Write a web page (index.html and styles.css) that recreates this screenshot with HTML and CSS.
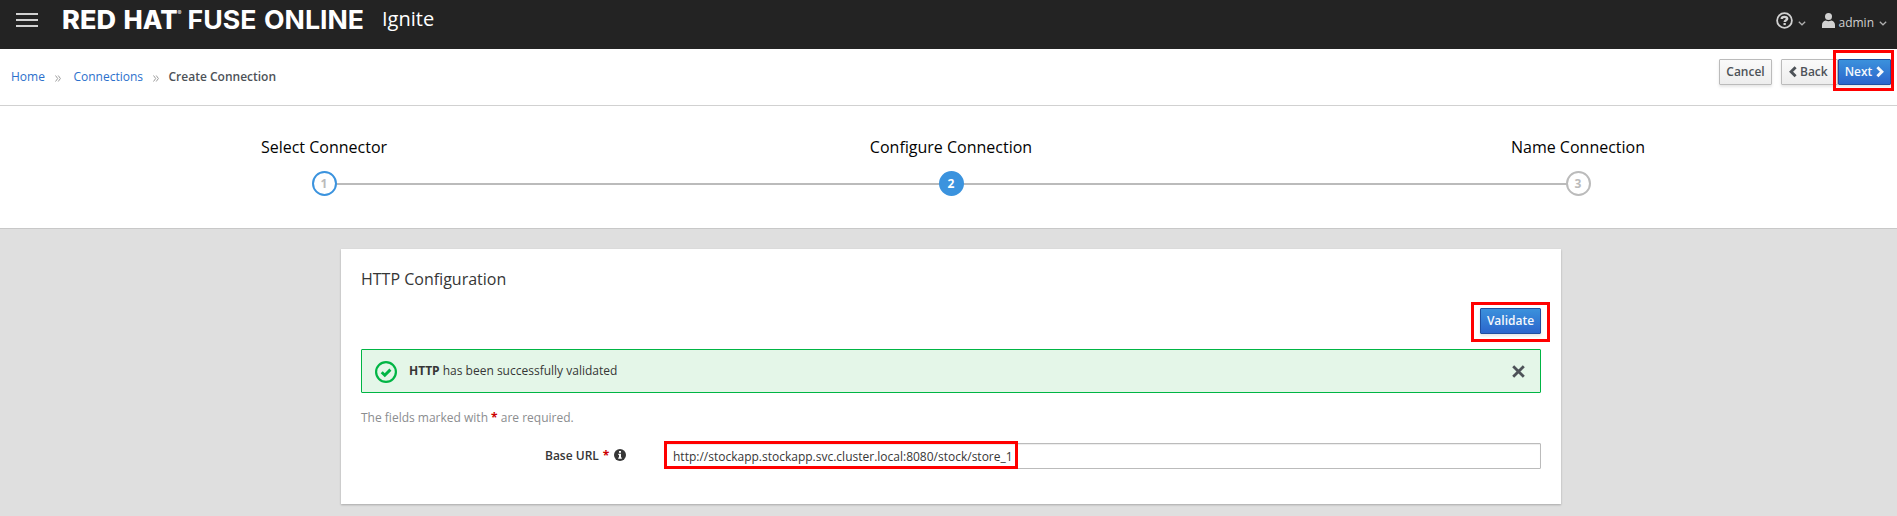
FILE: index.html
```html
<!DOCTYPE html>
<html lang="en">
<head>
<meta charset="utf-8">
<title>Create Connection</title>
<link rel="stylesheet" href="styles.css">
</head>
<body>
<header class="masthead">
  <div class="menu"><span></span><span></span><span></span></div>
  <svg class="brand" width="310" height="40" viewBox="0 0 310 40">
    <text class="brand-heavy" x="4" y="28.700" textLength="54" lengthAdjust="spacingAndGlyphs">RED</text>
    <text class="brand-heavy" x="65.500" y="28.700" textLength="54" lengthAdjust="spacingAndGlyphs">HAT</text>
    <text class="brand-reg" x="119.500" y="14.500">®</text>
    <text class="brand-bold" x="129.500" y="28.700" textLength="69" lengthAdjust="spacingAndGlyphs">FUSE</text>
    <text class="brand-bold" x="206" y="28.700" textLength="100" lengthAdjust="spacingAndGlyphs">ONLINE</text>
  </svg>
  <span class="app-name">Ignite</span>
  <div class="tools">
    <svg class="help" width="17" height="17" viewBox="0 0 17 17"><circle cx="8.5" cy="8.5" r="7.4" fill="none" stroke="#d1d1d1" stroke-width="1.8"/><path d="M5.700 7C5.800 4.300 11.200 4.200 11.200 6.800C11.200 8.300 8.800 8.200 8.700 10" fill="none" stroke="#d1d1d1" stroke-width="2.400"/><path d="M7.500 11h2.300v2.100H7.500z" fill="#d1d1d1"/></svg>
    <svg class="caret" width="8" height="5" viewBox="0 0 8 5"><path d="M.8.7L4 3.8L7.2.7"/></svg>
    <svg class="user" width="13" height="15" viewBox="0 0 13 15"><circle cx="6.5" cy="3.6" r="3.5" fill="#d1d1d1"/><path d="M0 15V12C0 9.2 1.5 7.8 3.7 7.4Q6.500 9 9.300 7.400C11.500 7.800 13 9.200 13 12V15z" fill="#d1d1d1"/></svg>
    <span class="user-name">admin</span>
    <svg class="caret" width="8" height="5" viewBox="0 0 8 5"><path d="M.8.7L4 3.8L7.2.7"/></svg>
  </div>
</header>
<nav class="toolbar">
  <div class="crumbs">
    <a>Home</a>
    <svg class="sep" width="6" height="7" viewBox="0 0 6 7"><path d="M.5.5L2.700 3.500L.5 6.500M3.200.5L5.400 3.500L3.200 6.500"/></svg>
    <a>Connections</a>
    <svg class="sep sep-last" width="6" height="7" viewBox="0 0 6 7"><path d="M.5.5L2.700 3.500L.5 6.500M3.200.5L5.400 3.500L3.200 6.500"/></svg>
    <b>Create Connection</b>
  </div>
  <div class="actions">
    <button class="btn cancel">Cancel</button>
    <button class="btn back"><svg width="8" height="12" viewBox="0 0 8 12"><path d="M6.600 1.300L2.100 5.800L6.600 10.300"/></svg>Back</button>
    <div class="marked">
      <button class="btn primary next">Next<svg width="8" height="12" viewBox="0 0 8 12"><path d="M1.400 1.300L5.900 5.800L1.400 10.300"/></svg></button>
      <span class="mark mark-next"></span>
    </div>
  </div>
</nav>
<ol class="wizard">
  <li class="step done"><span class="title">Select Connector</span><span class="num">1</span></li>
  <li class="step active"><span class="title">Configure Connection</span><span class="num">2</span></li>
  <li class="step"><span class="title">Name Connection</span><span class="num">3</span></li>
</ol>
<main class="card">
  <h2>HTTP Configuration</h2>
  <div class="validate-row">
    <div class="marked">
      <button class="btn primary validate">Validate</button>
      <span class="mark mark-validate"></span>
    </div>
  </div>
  <div class="alert">
    <svg class="ok" width="22" height="22" viewBox="0 0 22 22"><circle cx="11" cy="11" r="9.900" fill="none" stroke="#00b544" stroke-width="2.200"/><path d="M6.700 11.200L9.800 14.200L15.400 8.600" fill="none" stroke="#00b544" stroke-width="2.900"/></svg>
    <span class="message"><strong>HTTP</strong> has been successfully validated</span>
    <svg class="close" width="13" height="13" viewBox="0 0 13 13"><path d="M1.200 1.200L11.800 11.800M11.800 1.200L1.200 11.800" stroke="#4d5258" stroke-width="2.800"/></svg>
  </div>
  <p class="hint">The fields marked with <em>*</em> are required.</p>
  <div class="field">
    <label>Base URL <em>*</em><svg width="12" height="12" viewBox="0 0 12 12"><circle cx="6" cy="6" r="6" fill="#363636"/><path d="M5 2h2v1.700H5zM4.300 4.800H7v3.700h.8v1.300H4.200V8.500H5V6H4.300z" fill="#fff"/></svg></label>
    <div class="input">http://stockapp.stockapp.svc.cluster.local:8080/stock/store_1<span class="mark mark-url"></span></div>
  </div>
</main>
</body>
</html>
```
FILE: styles.css
```css
* { box-sizing: border-box; }
body {
  margin: 0;
  height: 516px;
  overflow: hidden;
  background: #dfdfdf;
  color: #363636;
  font: 12px/20px "Open Sans", sans-serif;
}
svg { display: block; flex: none; }
em { color: #c00; font-style: normal; font-weight: 700; }

.masthead {
  display: flex;
  align-items: flex-start;
  height: 49px;
  padding: 0 10px 0 16px;
  background: #232323;
}
.menu { display: grid; gap: 4px; margin-top: 13px; width: 22px; }
.menu span { height: 2px; background: #d1d1d1; }
.brand { margin-left: 20px; }
.brand text { fill: #fff; font-family: Inter, sans-serif; font-size: 25.500px; }
.brand .brand-heavy { font-weight: 800; }
.brand .brand-bold { font-weight: 700; }
.brand .brand-reg { font-size: 6px; }
.app-name { margin: 5px 0 0 14px; color: #fff; font-size: 20px; line-height: 28px; }
.tools { display: flex; margin-left: auto; color: #d1d1d1; }
.help { margin-top: 12px; }
.caret { margin-top: 21px; }
.caret path { fill: none; stroke: #b0b0b0; stroke-width: 1.200; }
.help + .caret { margin-left: 5px; }
.user { margin: 13px 3px 0 16px; }
.user-name { margin: 13px 5px 0 0; }

.toolbar {
  display: flex;
  justify-content: space-between;
  height: 57px;
  padding: 10px 6px 0 11px;
  border-bottom: 1px solid #d1d1d1;
  background: #fff;
}
.crumbs { display: flex; align-items: center; height: 36px; }
.crumbs a { color: #2b70cc; }
.crumbs b { color: #4d5258; font-weight: 600; }
.sep { margin: 2px 12.500px 0 10px; }
.sep-last { margin-right: 9.500px; }
.sep path { fill: none; stroke: #9c9c9c; }
.actions { display: flex; }
.btn {
  display: flex;
  align-items: center;
  justify-content: center;
  height: 26px;
  padding: 0;
  border: 1px solid #bbb;
  border-radius: 1px;
  background: linear-gradient(#fafafa, #ededed);
  box-shadow: 0 2px 3px rgba(3, 3, 3, .1);
  color: #4d5258;
  font: 600 12px/20px "Open Sans", sans-serif;
}
.btn path { fill: none; stroke: currentColor; stroke-width: 2.900; }
.cancel { width: 53px; }
.back { justify-content: flex-start; gap: 3px; width: 57px; margin-left: 9px; padding-left: 7px; }
.primary {
  border-color: #1f4fa0;
  background: linear-gradient(#3b91dc, #2b66cc);
  color: #f5f8fc;
}
.next { gap: 4px; width: 53px; }
.marked { position: relative; }
.mark { position: absolute; border: 3px solid #f00; }
.mark-next { left: -5px; top: -9px; width: 61px; height: 41px; }
.mark-validate { left: -9px; top: -6px; width: 79px; height: 40px; }
.mark-url { left: -2px; top: -3px; width: 354px; height: 28px; }

.wizard {
  display: grid;
  grid-template-columns: repeat(3, 627px);
  height: 123px;
  margin: 0;
  padding: 29px 0 0 10.500px;
  border-bottom: 1px solid #c8c8c8;
  background: #fff;
  list-style: none;
}
.step { position: relative; display: flex; flex-direction: column; align-items: center; }
.title { height: 35.500px; color: #030303; font-size: 16px; line-height: 24px; }
.num {
  position: relative;
  width: 25px;
  height: 25px;
  border: 2px solid #bbb;
  border-radius: 50%;
  background: #fff;
  color: #bbb;
  font-weight: 700;
  line-height: 22px;
  text-align: center;
}
.step + .step::before {
  content: "";
  position: absolute;
  right: 50%;
  top: 48px;
  width: 100%;
  height: 2px;
  background: #bbb;
}
.done .num { z-index: 1; border-color: #3b93de; }
.active .num { z-index: 1; border-color: #3b93de; background: #3b93de; color: #fff; }

.card {
  width: 1220px;
  height: 255px;
  margin: 20px 0 0 341px;
  padding: 20px;
  background: #fff;
  box-shadow: 0 1px 2px rgba(3, 3, 3, .25);
}
h2 { margin: 0; font-size: 16px; line-height: 20px; font-weight: 400; }
.validate-row { display: flex; justify-content: flex-end; margin-top: 19px; }
.validate { width: 61px; }
.alert {
  display: flex;
  align-items: center;
  height: 44px;
  margin-top: 15px;
  padding: 0 15px 2px 13px;
  border: 1px solid #00b544;
  border-radius: 1px;
  background: #e4f6e8;
}
.ok { margin: 3px 12px 0 0; }
.message { margin-top: 2px; }
.close { margin-left: auto; margin-top: 2px; }
.hint { margin: 15px 0 0; color: #8b8d8f; }
.field { display: flex; margin-top: 15px; }
.field label { display: flex; align-items: center; gap: 4px; width: 304px; height: 26px; padding-left: 184px; font-weight: 600; white-space: nowrap; }
.field label svg { margin: -2px 0 0 1px; }
.input {
  position: relative;
  flex: 1;
  height: 26px;
  padding: 3px 7px 0;
  border: 1px solid #bbb;
  border-radius: 1px;
  box-shadow: inset 0 1px 1px rgba(3, 3, 3, .075);
}
```
